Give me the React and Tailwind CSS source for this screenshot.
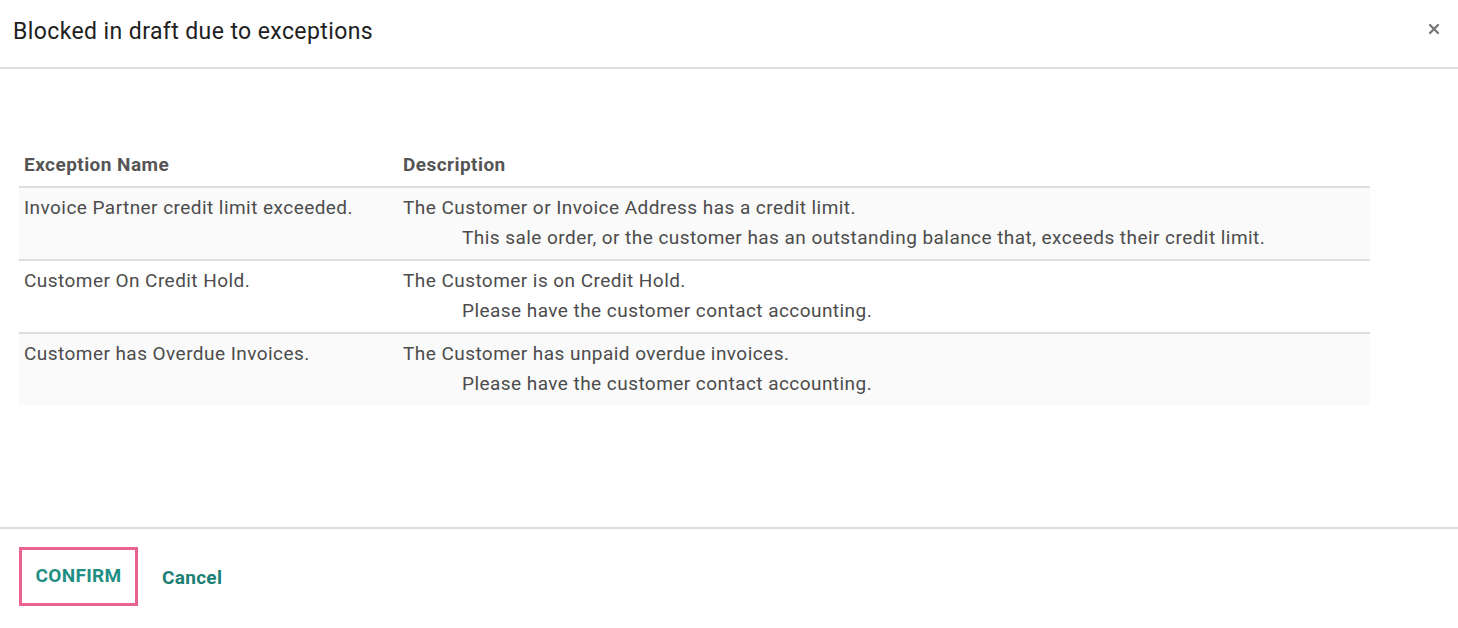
import { X } from "lucide-react";

const rows = [
  {
    name: "Invoice Partner credit limit exceeded.",
    line1: "The Customer or Invoice Address has a credit limit.",
    line2: "This sale order, or the customer has an outstanding balance that, exceeds their credit limit.",
  },
  {
    name: "Customer On Credit Hold.",
    line1: "The Customer is on Credit Hold.",
    line2: "Please have the customer contact accounting.",
  },
  {
    name: "Customer has Overdue Invoices.",
    line1: "The Customer has unpaid overdue invoices.",
    line2: "Please have the customer contact accounting.",
  },
];

export default function App() {
  return (
    <div className="w-[1458px] h-[628px] bg-white flex flex-col font-['Roboto',sans-serif] text-[#4c4c4c]">
      {/* header */}
      <div className="h-[69px] shrink-0 flex items-center justify-between pl-[13px] pr-[16px] border-b-2 border-[#dedede]">
        <h1 className="text-[23px] tracking-[0.4px] text-[#212121] leading-none -mt-[4px]">Blocked in draft due to exceptions</h1>
        <X size={16} strokeWidth={3.5} className="text-[#777] -mt-[10px]" />
      </div>

      {/* body */}
      <div className="flex-1 pt-[81px] px-[19px]">
        <table className="w-[1351px] border-collapse text-[19px] tracking-[0.45px]">
          <thead>
            <tr className="border-b-2 border-[#dedede]">
              <th className="w-[379px] text-left font-bold text-[#555] pl-[5px] pb-[6px] leading-[30px]">Exception Name</th>
              <th className="text-left font-bold text-[#555] pl-[5px] pb-[6px] leading-[30px]">Description</th>
            </tr>
          </thead>
          <tbody>
            {rows.map((r, i) => (
              <tr
                key={r.name}
                className={
                  (i % 2 === 0 ? "bg-[#fafafa] " : "bg-white ") +
                  (i < rows.length - 1 ? "border-b-2 border-[#dedede]" : "")
                }
              >
                <td className="align-top pl-[5px] pt-[5px] pb-[6px] leading-[30px]">{r.name}</td>
                <td className="align-top pl-[5px] pt-[5px] pb-[6px] leading-[30px]">
                  <div>{r.line1}</div>
                  <div className="pl-[59px]">{r.line2}</div>
                </td>
              </tr>
            ))}
          </tbody>
        </table>
      </div>

      {/* footer */}
      <div className="h-[101px] shrink-0 border-t-2 border-[#dedede] flex items-center gap-[24px] pl-[19px] pb-[4px]">
        <button className="w-[119px] h-[59px] border-[3px] border-[#e8648c] text-[#1f8f84] font-bold text-[19px] tracking-[0.3px]">
          CONFIRM
        </button>
        <button className="text-[#1c7f74] font-bold text-[19px] tracking-[0.3px] mt-[3px]">Cancel</button>
      </div>
    </div>
  );
}
